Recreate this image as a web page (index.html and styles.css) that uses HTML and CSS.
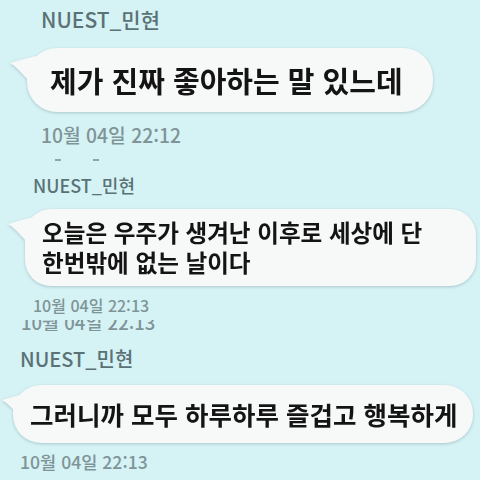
FILE: index.html
```html
<!DOCTYPE html>
<html lang="ko">
<head>
<meta charset="utf-8">
<link rel="stylesheet" href="styles.css">
</head>
<body>
<div class="page">
  <section class="shot shot1">
    <div class="name">NUEST_민현</div>
    <div class="bubble">
      <svg class="tail" width="26" height="28" viewBox="0 0 26 28"><path d="M26 0 C16 2 7 5 0 7 C7 11 14 20 22 28 L26 28 Z"/></svg>
      제가 진짜 좋아하는 말 있느데
    </div>
    <div class="time">10월 04일 22:12</div>
    <div class="dashes"><span></span><span></span></div>
  </section>
  <section class="shot shot2">
    <div class="name">NUEST_민현</div>
    <div class="bubble">
      <svg class="tail" width="26" height="28" viewBox="0 0 26 28"><path d="M26 0 C16 2 7 5 0 7 C7 11 14 20 22 28 L26 28 Z"/></svg>
      <div class="line">오늘은 우주가 생겨난 이후로 세상에 단</div>
      <div class="line">한번밖에 없는 날이다</div>
    </div>
    <div class="time">10월 04일 22:13</div>
    <div class="clip"><div class="clip-text">10월 04일 22:13</div></div>
  </section>
  <section class="shot shot3">
    <div class="name">NUEST_민현</div>
    <div class="bubble">
      <svg class="tail" width="26" height="28" viewBox="0 0 26 28"><path d="M26 0 C16 2 7 5 0 7 C7 11 14 20 22 28 L26 28 Z"/></svg>
      그러니까 모두 하루하루 즐겁고 행복하게
    </div>
    <div class="time">10월 04일 22:13</div>
  </section>
</div>
</body>
</html>
```

FILE: styles.css
```css
* { box-sizing: border-box; }
html, body { margin: 0; padding: 0; }
body {
  width: 480px;
  height: 480px;
  overflow: hidden;
  background: #d5f2f5;
  font-family: "Noto Sans CJK KR", "Noto Sans", sans-serif;
}
.page { display: flex; flex-direction: column; }
.shot {
  display: flex;
  flex-direction: column;
  align-items: flex-start;
  overflow: hidden;
}
.name { color: #5a7275; white-space: nowrap; font-weight: 500; }
.time { color: #7f9497; white-space: nowrap; font-weight: 500; }
.bubble {
  position: relative;
  background: #f7f8f8;
  color: #141414;
  font-weight: 700;
  white-space: nowrap;
  filter: drop-shadow(0 1px 1.5px rgba(90, 120, 125, 0.35));
}
.tail { position: absolute; top: 8px; left: -17px; }
.tail path { fill: #f7f8f8; }

/* shot 1 */
.shot1 { height: 165px; padding: 7px 0 0 41px; }
.shot1 .name { font-size: 21px; line-height: 24px; }
.shot1 .bubble {
  margin: 17px 0 0 -14px;
  height: 64px;
  line-height: 64px;
  font-size: 29px;
  padding: 0 30px 0 23px;
  border-radius: 30px;
}
.shot1 .time { margin-top: 12px; font-size: 19.3px; line-height: 22px; }
.dashes { display: flex; gap: 32px; margin: 13px 0 0 14px; }
.dashes span { width: 6px; height: 2px; background: #8fa3a6; }

/* shot 2 */
.shot2 { height: 170px; padding: 9px 0 0 33px; }
.shot2 .name { font-size: 18px; line-height: 22px; }
.shot2 .bubble {
  margin: 13px 0 0 -8px;
  width: 451px;
  font-size: 23.6px;
  padding: 8px 0 9px 17px;
  border-radius: 26px;
  display: flex;
  flex-direction: column;
}
.shot2 .line { height: 30px; line-height: 30px; }
.shot2 .time { margin-top: 9px; font-size: 16px; line-height: 20px; }
.clip { height: 11px; overflow: hidden; margin: 5px 0 0 -12px; }
.clip-text { margin-top: -5px; font-size: 18.5px; line-height: 14px; color: #7f9497; white-space: nowrap; font-weight: 500; }

/* shot 3 */
.shot3 { height: 145px; padding: 12px 0 0 20px; }
.shot3 .name { font-size: 20px; line-height: 24px; }
.shot3 .bubble {
  margin: 14px 0 0 -7px;
  width: 460px;
  height: 58px;
  line-height: 58px;
  font-size: 25.5px;
  padding: 0 0 0 17px;
  border-radius: 28px;
}
.shot3 .tail { left: -11px; }
.shot3 .time { margin-top: 8px; font-size: 17.6px; line-height: 22px; }
```
